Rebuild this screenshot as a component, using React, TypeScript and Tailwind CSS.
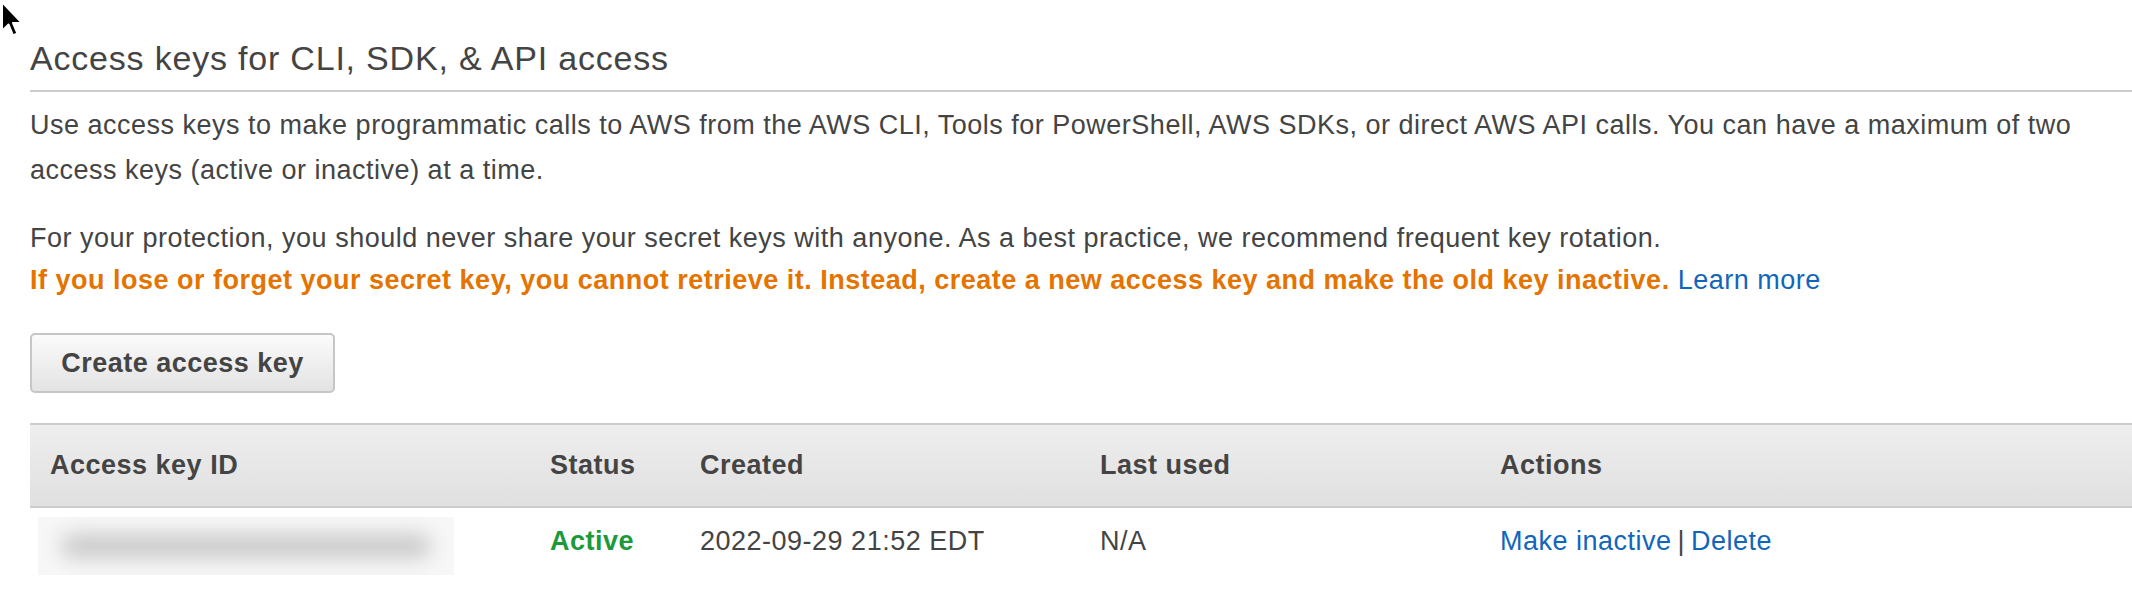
import React from 'react'

interface AccessKeyRow {
  status: string
  created: string
  lastUsed: string
}

const rows: AccessKeyRow[] = [
  { status: 'Active', created: '2022-09-29 21:52 EDT', lastUsed: 'N/A' },
]

function Cursor() {
  return (
    <svg
      className="absolute left-0 top-0"
      width="26"
      height="40"
      viewBox="0 0 26 40"
    >
      <path
        d="M2 2 L2 31 L8.5 24.5 L13 35.5 L17.5 33.5 L13 23 L22 23 Z"
        fill="#000"
        stroke="#fff"
        strokeWidth="2"
        strokeLinejoin="round"
      />
    </svg>
  )
}

function HeaderCell({ children }: { children?: React.ReactNode }) {
  return (
    <div className="px-[20px] text-[27px] font-bold tracking-[0.5px] text-[#444]">{children}</div>
  )
}

export default function App() {
  return (
    <div
      className="relative h-[592px] w-full overflow-hidden bg-white pl-[30px] text-[#444]"
      style={{ fontFamily: '"Liberation Sans", Arial, sans-serif' }}
    >
      <Cursor />

      <h2 className="pt-[38px] text-[34px] leading-[40px] font-normal tracking-[0.8px]">
        Access keys for CLI, SDK, &amp; API access
      </h2>
      <div className="mt-[12px] h-[2px] bg-[#cccccc]" />

      <p className="mt-[11px] text-[27px] leading-[45px] tracking-[0.5px]">
        Use access keys to make programmatic calls to AWS from the AWS CLI, Tools for PowerShell, AWS SDKs, or
        direct AWS API calls. You can have a maximum of two access keys (active or inactive) at a time.
      </p>

      <p className="mt-[24px] text-[27px] leading-[42px] tracking-[0.5px]">
        For your protection, you should never share your secret keys with anyone. As a best practice, we recommend
        frequent key rotation.
        <br />
        <span className="font-bold text-[#e47300]">
          If you lose or forget your secret key, you cannot retrieve it. Instead, create a new access key and make the
          old key inactive.
        </span>{' '}
        <a className="text-[#1166bb]">Learn more</a>
      </p>

      <button className="mt-[32px] h-[60px] w-[305px] rounded-[5px] border-2 border-[#c6c6c6] bg-gradient-to-b from-[#fbfbfb] to-[#e3e3e3] text-[27px] font-bold tracking-[0.5px] text-[#444]">
        Create access key
      </button>

      <div className="mt-[30px]">
        <div className="grid h-[85px] grid-cols-[500px_150px_400px_400px_1fr] items-center border-y-2 border-[#cccccc] bg-gradient-to-b from-[#eeeeee] to-[#e0e0e0]">
          <HeaderCell>Access key ID</HeaderCell>
          <HeaderCell>Status</HeaderCell>
          <HeaderCell>Created</HeaderCell>
          <HeaderCell>Last used</HeaderCell>
          <HeaderCell>Actions</HeaderCell>
        </div>

        {rows.map((row, i) => (
          <div
            key={i}
            className="grid grid-cols-[500px_150px_400px_400px_1fr] items-start text-[27px] tracking-[0.5px]"
          >
            <div className="pl-[8px] pt-[9px]">
              <div className="flex h-[58px] w-[416px] items-center justify-center overflow-hidden bg-[#f7f7f7]">
                <div className="h-[24px] w-[370px] rounded-full bg-[#c9c9c9] blur-[10px]" />
              </div>
            </div>
            <div className="px-[20px] pt-[13px] font-bold text-[#1b9a3b]">{row.status}</div>
            <div className="px-[20px] pt-[13px]">{row.created}</div>
            <div className="px-[20px] pt-[13px]">{row.lastUsed}</div>
            <div className="px-[20px] pt-[13px]">
              <a className="text-[#1166bb]">Make inactive</a>
              <span className="mx-[6px] text-[#444]">|</span>
              <a className="text-[#1166bb]">Delete</a>
            </div>
          </div>
        ))}
      </div>
    </div>
  )
}
